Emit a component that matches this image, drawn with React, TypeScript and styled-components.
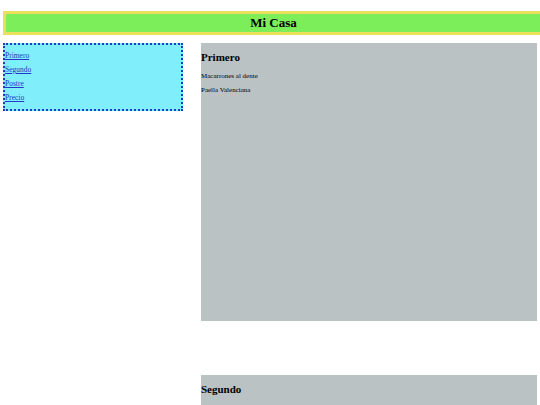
import React from 'react';
import styled, { createGlobalStyle } from 'styled-components';

const GlobalStyle = createGlobalStyle`
  html, body {
    margin: 0;
    padding: 0;
    background: #ffffff;
    font-family: "Liberation Serif", "Times New Roman", serif;
    overflow: hidden;
  }
`;

const menu = [
    { title: 'Primero', items: ['Macarrones al dente', 'Paella Valenciana'] },
    { title: 'Segundo', items: ['Filete a la plancha'] },
];

const App: React.FC = () => {
    return (
        <>
            <GlobalStyle />
            <Page>
                <Header>Mi Casa</Header>
                <Layout>
                    <Nav>
                        <NavLink href="#primero">Primero</NavLink>
                        <NavLink href="#segundo">Segundo</NavLink>
                        <NavLink href="#postre">Postre</NavLink>
                        <NavLink href="#precio">Precio</NavLink>
                    </Nav>
                    <Main>
                        {menu.map(section => (
                            <Section key={section.title} id={section.title.toLowerCase()}>
                                <SectionTitle>{section.title}</SectionTitle>
                                {section.items.map(item => (
                                    <Dish key={item}>{item}</Dish>
                                ))}
                            </Section>
                        ))}
                    </Main>
                </Layout>
            </Page>
        </>
    );
};

export default App;

const Page = styled.div`
  padding: 11px 0 0 3px;
  width: 560px;
`;

const Header = styled.header`
  box-sizing: border-box;
  width: 541px;
  height: 24px;
  border: 3px solid #ebe05c;
  background: #7bee5a;
  color: #000;
  font-weight: bold;
  font-size: 13px;
  line-height: 17px;
  text-align: center;
`;

const Layout = styled.div`
  display: grid;
  grid-template-columns: 180px 336px;
  column-gap: 18px;
  align-items: start;
  margin-top: 8px;
`;

const Nav = styled.nav`
  box-sizing: border-box;
  height: 68px;
  border: 2px dotted #1d3fbf;
  background: #80eefb;
  display: flex;
  flex-direction: column;
  padding: 7px 0 0 0;
  gap: 6px;
`;

const NavLink = styled.a`
  font-size: 7.5px;
  line-height: 8px;
  color: #2438c8;
  text-decoration: underline;
`;

const Main = styled.main`
  display: flex;
  flex-direction: column;
  gap: 54px;
`;

const Section = styled.section`
  height: 278px;
  background: #bac2c3;
  padding-top: 8px;
  box-sizing: border-box;
`;

const SectionTitle = styled.h2`
  margin: 0 0 8px 0;
  font-size: 11px;
  line-height: 13px;
  font-weight: bold;
  color: #000;
`;

const Dish = styled.p`
  margin: 0 0 6px 0;
  font-size: 7px;
  line-height: 8px;
  color: #000;
`;
